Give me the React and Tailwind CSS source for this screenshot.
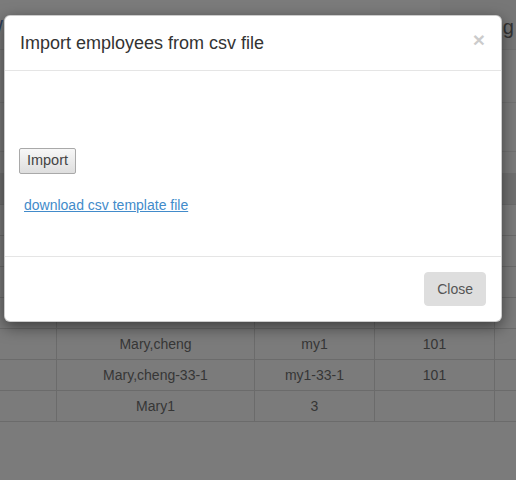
import React from "react";

const rows = [
  ["", "", "", ""],
  ["", "", "", ""],
  ["", "", "", ""],
  ["", "", "", ""],
  ["Mary,cheng", "my1", "101", ""],
  ["Mary,cheng-33-1", "my1-33-1", "101", ""],
  ["Mary1", "3", "", ""],
];

function Row({ cells, className = "" }) {
  return (
    <div className={"grid grid-cols-[57px_198px_120px_120px_1fr] h-[31px] border-b border-[#6b6b6b] " + className}>
      <div className="border-r border-[#6b6b6b]" />
      {cells.map((c, i) => (
        <div key={i} className={"flex items-center justify-center text-[14px] text-[#363636] " + (i < 3 ? "border-r border-[#6b6b6b]" : "")}>
          {c}
        </div>
      ))}
    </div>
  );
}

export default function App() {
  return (
    <div className="relative w-[516px] h-[480px] overflow-hidden bg-[#7b7b7b]" style={{ fontFamily: '"Liberation Sans", Arial, sans-serif' }}>
      {/* dimmed page underneath */}
      <div className="flex flex-col">
        <div className="h-[50px] flex border-b border-[#727272]">
          <div className="flex-1 pt-[14px] text-[18px] text-[#2c3e5a] -ml-[14px]">W</div>
          <div className="w-[76px] bg-[#777777] flex justify-end items-start pt-[12px] pr-[2px] text-[20px] text-[#333]">ng</div>
        </div>
        <div className="h-[53px] border-b border-[#727272]" />
        <div className="h-[49px] border-b border-[#727272]" />
        <div className="h-[21px]" />
        <div className="h-[32px] bg-[#707070] border-b border-[#6b6b6b] grid grid-cols-[57px_198px_120px_120px_1fr]">
          <div className="border-r border-[#6b6b6b]" />
          <div className="border-r border-[#6b6b6b]" />
          <div className="border-r border-[#6b6b6b]" />
          <div className="border-r border-[#6b6b6b]" />
          <div />
        </div>
        {rows.map((r, i) => (
          <Row key={i} cells={r} />
        ))}
      </div>

      {/* modal */}
      <div className="absolute left-[4px] top-[15px] w-[498px] bg-white rounded-[6px] border border-black/20 shadow-[0_5px_15px_rgba(0,0,0,0.5)]">
        <div className="flex items-start justify-between px-[15px] py-[15px] border-b border-[#e5e5e5]">
          <h4 className="text-[18px] leading-[24px] text-[#333]">Import employees from csv file</h4>
          <button className="text-[21px] leading-none font-bold text-black opacity-20 -mt-[2px] mr-[1px]">×</button>
        </div>
        <div className="px-[15px] pt-[77px] h-[185px] flex flex-col items-start">
          <button className="-ml-[1px] w-[57px] h-[26px] border border-[#a9a9a9] rounded-[2px] bg-gradient-to-b from-[#f7f7f7] to-[#dedede] text-[14.5px] text-[#444] flex items-center justify-center">
            Import
          </button>
          <a href="#" className="mt-[21px] ml-[4px] text-[14px] leading-[20px] text-[#428bca] underline">
            download csv template file
          </a>
        </div>
        <div className="border-t border-[#e5e5e5] p-[15px] flex justify-end">
          <button className="h-[34px] px-[12px] rounded-[4px] bg-[#dedede] text-[14px] text-[#555] border border-[#dedede]">
            Close
          </button>
        </div>
      </div>
    </div>
  );
}
